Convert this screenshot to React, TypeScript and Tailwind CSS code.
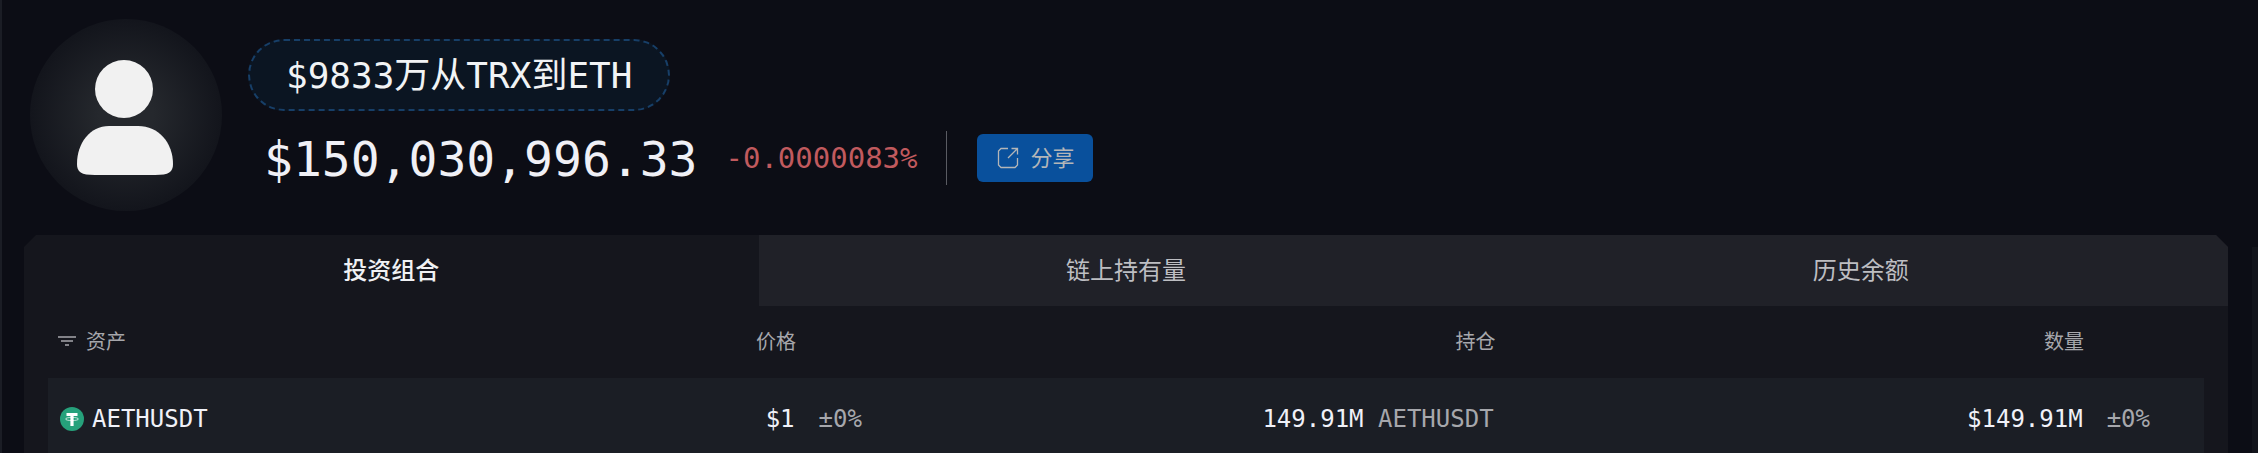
import React from "react";

type Asset = {
  symbol: string;
  price: string;
  priceChange: string;
  amount: string;
  value: string;
  valueChange: string;
};

const tabs = ["投资组合", "链上持有量", "历史余额"];

const assets: Asset[] = [
  {
    symbol: "AETHUSDT",
    price: "$1",
    priceChange: "±0%",
    amount: "149.91M",
    value: "$149.91M",
    valueChange: "±0%",
  },
];

function Avatar() {
  return (
    <div className="flex size-48 shrink-0 items-center justify-center rounded-full bg-radial from-[#25282d] from-20% to-[#13151c] to-70%">
      <svg viewBox="0 0 192 192" className="size-48" fill="#f1f1f1" aria-hidden="true">
        <circle cx="94" cy="70" r="29" />
        <path d="M79 107H108C129 107 143 124 143 145C143 153 139 156 125 156H65C51 156 47 153 47 145C47 124 60 107 79 107Z" />
      </svg>
    </div>
  );
}

function ShareIcon() {
  return (
    <svg viewBox="0 0 22 22" className="size-[22px]" fill="none" stroke="currentColor" strokeWidth="1.3" aria-hidden="true">
      <path d="M11 1.500H4L1.500 4V18L4 20.500H18L20.500 18V11" />
      <path d="M11 11L20.500 1.500M14.500 1.500H20.500V7.500" />
    </svg>
  );
}

function FilterIcon() {
  return (
    <svg viewBox="0 0 18 12" className="h-3 w-[18px]" fill="none" stroke="currentColor" strokeWidth="1.600" aria-hidden="true">
      <path d="M0 1H18M3 5H15M7 9H11" />
    </svg>
  );
}

function TetherIcon() {
  return (
    <svg viewBox="0 0 24 24" className="size-6" aria-hidden="true">
      <circle cx="12" cy="12" r="12" fill="#26a17b" />
      <path d="M6.500 6H17.500V9H13.600V19H10.400V9H6.500Z" fill="#fff" />
      <ellipse cx="12" cy="12" rx="6.500" ry="1.600" fill="none" stroke="#fff" strokeWidth="0.7" />
    </svg>
  );
}

function Header() {
  return (
    <header className="flex items-start gap-[26px] pt-[19px] pl-7">
      <Avatar />
      <div className="pt-5">
        <a
          href="#"
          className="inline-flex h-[72px] items-center rounded-full border-2 border-dashed border-[#173f68] bg-[#0b1522] px-9 pt-0.5 text-4xl text-[#f1f3f5]"
        >
          $9833万从TRX到ETH
        </a>
        <div className="mt-5 flex items-center pl-4">
          <h1 className="pt-0.5 text-5xl text-[#f0f0f6]">$150,030,996.33</h1>
          <span className="ml-7 pt-0.5 text-[29px] text-[#c15a5e]">-0.0000083%</span>
          <div className="mr-[30px] ml-7 h-[54px] w-px bg-[#5a5b62]" />
          <button className="flex h-12 cursor-pointer items-center gap-3 rounded-md bg-[#09509c] pr-[18px] pl-5 text-[22px] text-[#b4b6b8]">
            <ShareIcon />
            分享
          </button>
        </div>
      </div>
    </header>
  );
}

function AssetTable() {
  return (
    <table className="w-full table-fixed">
      <thead>
        <tr className="h-[72px] text-xl text-[#a6a7ac]">
          <th className="w-[18%] pl-2.5 text-left font-normal">
            <div className="flex items-center gap-2.5">
              <FilterIcon />
              资产
            </div>
          </th>
          <th className="w-[20.400%] pr-20 text-right font-normal">价格</th>
          <th className="w-[29.300%] pr-3 text-right font-normal">持仓</th>
          <th className="pr-[120px] text-right font-normal">数量</th>
        </tr>
      </thead>
      <tbody>
        {assets.map((asset) => (
          <tr key={asset.symbol} className="h-20 bg-[#1b1e25] text-2xl text-[#f0f1f8]">
            <td className="pt-0.5 pl-3">
              <a href="#" className="flex items-center gap-2">
                <TetherIcon />
                {asset.symbol}
              </a>
            </td>
            <td className="pt-0.5 pr-3.5">
              <div className="flex justify-end gap-6">
                {asset.price}
                <span className="text-[#a6a7ac]">{asset.priceChange}</span>
              </div>
            </td>
            <td className="pt-0.5 pr-3.5 text-right">
              {asset.amount} <span className="text-[#a6a7ac]">{asset.symbol}</span>
            </td>
            <td className="pt-0.5 pr-[54px]">
              <div className="flex justify-end gap-6">
                {asset.value}
                <span className="text-[#a6a7ac]">{asset.valueChange}</span>
              </div>
            </td>
          </tr>
        ))}
      </tbody>
    </table>
  );
}

export default function App() {
  return (
    <div className="h-screen overflow-hidden border-l-2 border-[#1b1d25] bg-[#0c0d15] font-['DejaVu_Sans_Mono','Noto_Sans_CJK_SC',monospace]">
      <Header />
      <main className="mt-6 flex items-start gap-6 pl-[22px]">
        <section className="min-w-0 flex-1 bg-[#15161d] [clip-path:polygon(12px_0,calc(100%-12px)_0,100%_12px,100%_100%,0_100%,0_12px)]">
          <div className="grid grid-cols-3" role="tablist">
            {tabs.map((tab, i) => (
              <button
                key={tab}
                role="tab"
                aria-selected={i === 0}
                className={`h-[71px] cursor-pointer text-2xl ${
                  i === 0 ? "font-medium text-[#f0f1f4]" : "bg-[#202128] text-[#bdbec2]"
                }`}
              >
                {tab}
              </button>
            ))}
          </div>
          <div className="px-6">
            <AssetTable />
          </div>
        </section>
        <aside className="mt-3 h-60 w-1.5 bg-[#12141b]" />
      </main>
    </div>
  );
}
